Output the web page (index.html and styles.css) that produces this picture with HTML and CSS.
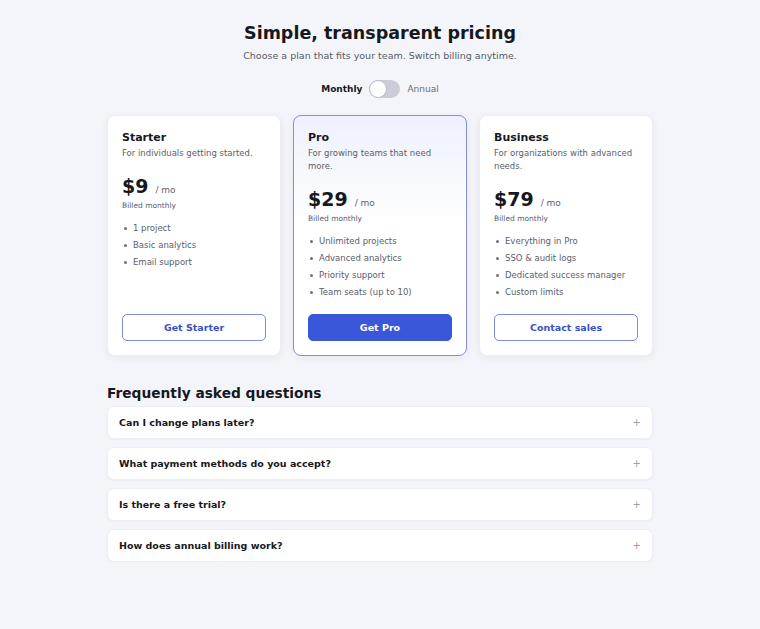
FILE: index.html
```html
<!DOCTYPE html>
<html lang="en">
<head>
    <meta charset="UTF-8">
    <meta name="viewport" content="width=device-width, initial-scale=1.0">
    <title>Pricing</title>
    <link rel="stylesheet" href="styles.css">
</head>
<body>
    <main class="page">
        <header class="intro">
            <h1>Simple, transparent pricing</h1>
            <p class="subtitle">Choose a plan that fits your team. Switch billing anytime.</p>
            <div class="billing-toggle">
                <span class="toggle-label active">Monthly</span>
                <span class="switch"><span class="knob"></span></span>
                <span class="toggle-label">Annual</span>
            </div>
        </header>

        <section class="plans">
            <div class="plan">
                <h2>Starter</h2>
                <p class="plan-desc">For individuals getting started.</p>
                <div class="price"><span class="amount">$9</span><span class="per">/ mo</span></div>
                <p class="billed">Billed monthly</p>
                <ul class="features">
                    <li>1 project</li>
                    <li>Basic analytics</li>
                    <li>Email support</li>
                </ul>
                <button class="plan-button">Get Starter</button>
            </div>

            <div class="plan featured">
                <h2>Pro</h2>
                <p class="plan-desc">For growing teams that need more.</p>
                <div class="price"><span class="amount">$29</span><span class="per">/ mo</span></div>
                <p class="billed">Billed monthly</p>
                <ul class="features">
                    <li>Unlimited projects</li>
                    <li>Advanced analytics</li>
                    <li>Priority support</li>
                    <li>Team seats (up to 10)</li>
                </ul>
                <button class="plan-button primary">Get Pro</button>
            </div>

            <div class="plan">
                <h2>Business</h2>
                <p class="plan-desc">For organizations with advanced needs.</p>
                <div class="price"><span class="amount">$79</span><span class="per">/ mo</span></div>
                <p class="billed">Billed monthly</p>
                <ul class="features">
                    <li>Everything in Pro</li>
                    <li>SSO &amp; audit logs</li>
                    <li>Dedicated success manager</li>
                    <li>Custom limits</li>
                </ul>
                <button class="plan-button">Contact sales</button>
            </div>
        </section>

        <section class="faq">
            <h2 class="faq-title">Frequently asked questions</h2>
            <div class="faq-list">
                <div class="faq-item"><span>Can I change plans later?</span><span class="plus">+</span></div>
                <div class="faq-item"><span>What payment methods do you accept?</span><span class="plus">+</span></div>
                <div class="faq-item"><span>Is there a free trial?</span><span class="plus">+</span></div>
                <div class="faq-item"><span>How does annual billing work?</span><span class="plus">+</span></div>
            </div>
        </section>
    </main>
</body>
</html>
```

FILE: styles.css
```css
/* --- General Setup --- */
:root {
    --primary-color: #3b57d9;
    --text-color: #16181d;
    --muted: #5a606b;
    --page-bg: #f4f5fa;
}

body {
    font-family: 'DejaVu Sans', 'Liberation Sans', sans-serif;
    margin: 0;
    background-color: var(--page-bg);
    color: var(--text-color);
}

.page {
    width: 546px;
    margin: 0 auto;
    padding-top: 22px;
}

/* --- Header --- */
.intro {
    text-align: center;
}

h1 {
    font-size: 17.5px;
    line-height: 22px;
    font-weight: 700;
    margin: 0;
}

.subtitle {
    font-size: 9.5px;
    line-height: 14px;
    color: #555b66;
    margin: 5px 0 0;
}

.billing-toggle {
    display: flex;
    justify-content: center;
    align-items: center;
    gap: 7px;
    height: 18px;
    margin-top: 17px;
}

.toggle-label {
    font-size: 9px;
    color: #666c76;
}

.toggle-label.active {
    font-weight: 700;
    color: var(--text-color);
}

.switch {
    width: 31px;
    height: 18px;
    border-radius: 9px;
    background-color: #c9cdd7;
    display: flex;
    align-items: center;
    padding: 1px;
    box-sizing: border-box;
}

.knob {
    width: 16px;
    height: 16px;
    border-radius: 50%;
    background-color: #ffffff;
    box-shadow: 0 0 0 1px #b8bcc6;
}

/* --- Plan Cards --- */
.plans {
    display: grid;
    grid-template-columns: repeat(3, 1fr);
    gap: 12px;
    margin-top: 17px;
}

.plan {
    display: flex;
    flex-direction: column;
    background-color: #ffffff;
    border: 1px solid #eceef4;
    border-radius: 8px;
    padding: 15px 14px 14px;
    box-shadow: 0 2px 8px rgba(20, 30, 60, 0.06);
}

.plan.featured {
    border-color: #8290dc;
    background-image: linear-gradient(to bottom, #eef1fd, #ffffff 45%);
}

.plan h2 {
    font-size: 11px;
    line-height: 14px;
    font-weight: 700;
    margin: 0 0 2px;
}

.plan-desc {
    font-size: 8.5px;
    line-height: 13px;
    color: var(--muted);
    margin: 0 0 14px;
}

.price {
    display: flex;
    align-items: baseline;
    gap: 7px;
    height: 24px;
    line-height: 24px;
}

.amount {
    font-size: 19px;
    font-weight: 700;
}

.per {
    font-size: 9px;
    color: var(--muted);
}

.billed {
    font-size: 7.5px;
    line-height: 10px;
    color: var(--muted);
    margin: 3px 0 0;
}

.features {
    list-style: none;
    padding: 0;
    margin: 8.5px 0 0;
}

.features li {
    font-size: 8.5px;
    line-height: 17px;
    color: var(--muted);
    padding-left: 11px;
    position: relative;
}

.features li::before {
    content: '';
    position: absolute;
    left: 1.5px;
    top: 7px;
    width: 3.5px;
    height: 3.5px;
    border-radius: 50%;
    background-color: #6b717c;
}

/* --- Buttons --- */
.plan-button {
    height: 27px;
    width: 100%;
    border: 1px solid #7f8cd6;
    border-radius: 5px;
    background-color: #ffffff;
    color: #3b4fc4;
    font-family: inherit;
    font-size: 9.5px;
    font-weight: 700;
    cursor: pointer;
}

.plan.featured .plan-button {
    margin-top: 13.5px;
}

.plan:not(.featured) .plan-button {
    margin-top: auto;
}

.plan-button.primary {
    background-color: var(--primary-color);
    border-color: var(--primary-color);
    color: #ffffff;
}

/* --- FAQ --- */
.faq-title {
    font-size: 13.75px;
    line-height: 18px;
    font-weight: 700;
    margin: 28px 0 4px;
}

.faq-list {
    display: flex;
    flex-direction: column;
    gap: 8px;
}

.faq-item {
    display: flex;
    justify-content: space-between;
    align-items: center;
    height: 33px;
    padding: 0 11px;
    background-color: #ffffff;
    border: 1px solid #eceef4;
    border-radius: 7px;
    box-sizing: border-box;
    box-shadow: 0 1px 2px rgba(20, 30, 60, 0.04);
    font-size: 9.5px;
    font-weight: 700;
}

.plus {
    font-weight: 400;
    font-size: 10px;
    color: #9a9fa8;
}
```
